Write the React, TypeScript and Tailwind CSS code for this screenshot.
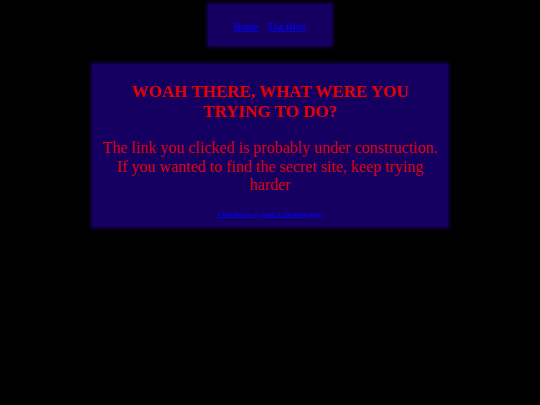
export default function App() {
  return (
    <div
      className="min-h-screen w-full bg-black"
      style={{ fontFamily: '"Liberation Serif", "Times New Roman", serif' }}
    >
      <div className="flex flex-col items-center pt-[4px]">
        <nav className="flex h-[42px] w-[124px] items-center justify-center gap-[10px] bg-[#150061] pt-[3px] text-[10px] leading-[12px] shadow-[0_0_4px_1px_#150061]">
          <a href="#" className="text-[#0000ee] underline">Home</a>
          <a href="#" className="text-[#0000ee] underline">The Blog</a>
        </nav>
        <main className="mt-[18px] flex w-[356px] flex-col items-center bg-[#150061] px-[8px] pb-[8px] pt-[18px] text-center shadow-[0_0_4px_1px_#150061]">
          <h1 className="text-[17px] font-bold leading-[20px] text-[#e00000]">
            WOAH THERE, WHAT WERE YOU
            <br />
            TRYING TO DO?
          </h1>
          <p className="mt-[17px] text-[16px] leading-[18.5px] text-[#d80010]">
            The link you clicked is probably under construction. If you wanted to find the secret site, keep trying harder
          </p>
          <a href="#" className="mt-[14px] text-[6.7px] leading-[10px] text-[#0000ee] underline">
            Click here to go back to the main page
          </a>
        </main>
      </div>
    </div>
  );
}
